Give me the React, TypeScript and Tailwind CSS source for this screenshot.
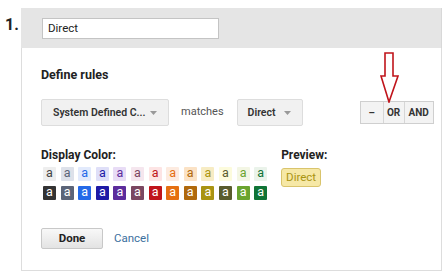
import React from "react";

const light = [
  ["#eeeeee", "#444444"],
  ["#dde1ea", "#5b6478"],
  ["#e2eafc", "#2469e8"],
  ["#dfdff8", "#1f1aa6"],
  ["#e8dcf6", "#5c2c9c"],
  ["#f5e6ee", "#7b4761"],
  ["#fde4e4", "#c0141b"],
  ["#fdebe0", "#e56f11"],
  ["#fbe2c5", "#b0690c"],
  ["#f7ecc4", "#a99412"],
  ["#fcfbdc", "#595c2d"],
  ["#f3f6e4", "#6aa42f"],
  ["#eaf3ea", "#107436"],
];

const dark = ["#333333", "#5b6478", "#2469e8", "#1f1aa6", "#5c2c9c", "#7b4761", "#c0141b", "#e56f11", "#b0690c", "#a99412", "#595c2d", "#6aa42f", "#107436"];

const Caret = () => (
  <svg width="7" height="4" viewBox="0 0 7 4" className="shrink-0">
    <path d="M0 0h7L3.5 4z" fill="#999" />
  </svg>
);

export default function App() {
  return (
    <div className="relative w-[447px] h-[278px] bg-white text-[#222]" style={{ fontFamily: "Roboto, 'Noto Sans', sans-serif" }}>
      <div className="flex pt-[8px] pl-[5px]">
        <div className="w-[16px] pt-[8px] text-[16px] font-bold leading-[18px] text-[#222]">1.</div>

        <div className="w-[421px] flex flex-col">
          {/* header */}
          <div className="h-[40px] bg-[#e5e5e5] border-r border-[#d8d8d8] pl-[21px] pt-[10px]">
            <div className="w-[177px] h-[21px] bg-white border border-[#c4c4c4] flex items-center pl-[5px] text-[11.5px]">
              Direct
            </div>
          </div>

          {/* body */}
          <div className="h-[223px] border-x border-b border-[#dddddd] pl-[19px] pt-[19px]">
            <div className="text-[12.5px] font-bold leading-[16px]">Define rules</div>

            <div className="flex items-center mt-[16px]">
              <div className="w-[128px] h-[27px] bg-[#f1f1f1] border border-[#dddddd] rounded-[2px] flex items-center pl-[11px] pr-[11px] justify-between">
                <span className="text-[10.5px] font-semibold text-[#333] whitespace-nowrap">System Defined C...</span>
                <Caret />
              </div>
              <span className="ml-[12px] text-[11px] text-[#555]">matches</span>
              <div className="ml-[13px] w-[66px] h-[27px] bg-[#f1f1f1] border border-[#dddddd] rounded-[2px] flex items-center pl-[10px] pr-[11px] justify-between">
                <span className="text-[10.5px] font-semibold text-[#333]">Direct</span>
                <Caret />
              </div>
              <div className="ml-[57px] h-[23px] flex border border-[#cfcfcf] bg-[#f3f3f3] text-[10px] font-bold text-[#333]">
                <div className="w-[23px] flex items-center justify-center border-r border-[#d6d6d6]">–</div>
                <div className="w-[21px] flex items-center justify-center border-r border-[#d6d6d6]">OR</div>
                <div className="w-[28px] flex items-center justify-center">AND</div>
              </div>
            </div>

            <div className="flex mt-[21px]">
              <div className="flex flex-col">
                <div className="text-[12px] font-bold leading-[16px]">Display Color:</div>
                <div className="grid grid-cols-[repeat(13,13px)] gap-x-[4.6px] gap-y-[5px] mt-[4px] ml-[2px]">
                  {light.map(([bg, fg], i) => (
                    <div key={"l" + i} className="w-[13px] h-[14px] rounded-[1px] flex items-center justify-center text-[12.5px] leading-none pb-[2px]" style={{ background: bg, color: fg }}>
                      a
                    </div>
                  ))}
                  {dark.map((bg, i) => (
                    <div key={"d" + i} className="w-[13px] h-[14px] rounded-[1px] flex items-center justify-center text-[12.5px] leading-none pb-[2px] text-white" style={{ background: bg }}>
                      a
                    </div>
                  ))}
                </div>
              </div>
              <div className="flex flex-col ml-[14px]">
                <div className="text-[12px] font-bold leading-[16px]">Preview:</div>
                <div className="mt-[5px] w-[40px] h-[19px] bg-[#f6e8a6] border border-[#d9c46c] rounded-[3px] flex items-center justify-center text-[11.5px] text-[#a99412]">
                  Direct
                </div>
              </div>
            </div>

            <div className="flex items-center mt-[28px]">
              <div className="w-[62px] h-[21px] border border-[#c8c8c8] rounded-[2px] bg-gradient-to-b from-[#f8f8f8] to-[#e3e3e3] flex items-center justify-center text-[11.5px] font-bold text-[#222]">
                Done
              </div>
              <span className="ml-[11px] text-[11.5px] text-[#3b6f9e]">Cancel</span>
            </div>
          </div>
        </div>
      </div>

      {/* annotation arrow */}
      <svg className="absolute left-[380px] top-[52px]" width="20" height="51" viewBox="0 0 20 51">
        <path d="M5 1h8v23h5L9 50 1 24h4z" fill="white" stroke="#c0141b" strokeWidth="1.6" strokeLinejoin="miter" />
      </svg>
    </div>
  );
}
